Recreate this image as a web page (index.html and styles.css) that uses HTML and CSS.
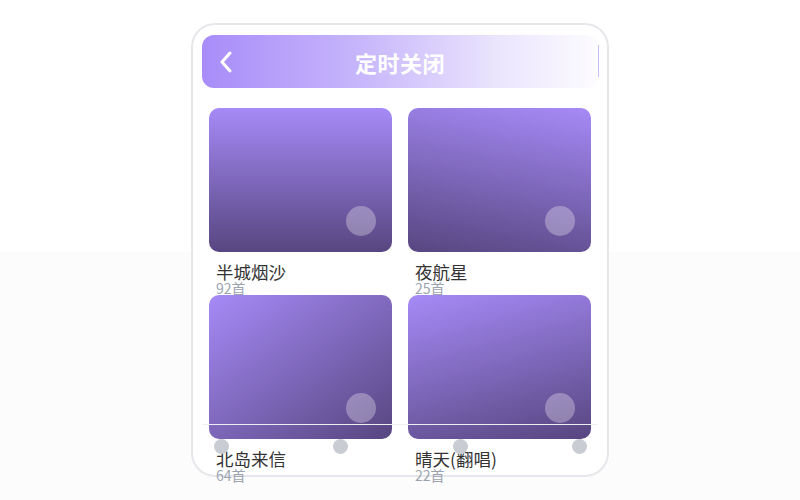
FILE: index.html
```html
<!DOCTYPE html>
<html lang="zh-CN">
<head>
    <meta charset="UTF-8">
    <meta name="viewport" content="width=device-width, initial-scale=1.0">
    <title>定时关闭</title>
    <link rel="stylesheet" href="styles.css">
</head>
<body>
    <div class="phone">
        <div class="topbar">
            <a class="back" href="javascript:;">
                <svg width="14" height="22" viewBox="0 0 14 22">
                    <path d="M11 2 L3 11 L11 20" fill="none" stroke="#fff" stroke-width="3" stroke-linecap="round" stroke-linejoin="round"/>
                </svg>
            </a>
            <h1 class="title">定时关闭</h1>
        </div>

        <ul class="albums">
            <li class="album">
                <div class="cover cover-a"><span class="play"></span></div>
                <p class="name">半城烟沙</p>
                <p class="count">92首</p>
            </li>
            <li class="album">
                <div class="cover cover-b"><span class="play"></span></div>
                <p class="name">夜航星</p>
                <p class="count">25首</p>
            </li>
            <li class="album">
                <div class="cover cover-c"><span class="play"></span></div>
                <p class="name">北岛来信</p>
                <p class="count">64首</p>
            </li>
            <li class="album">
                <div class="cover cover-d"><span class="play"></span></div>
                <p class="name">晴天(翻唱)</p>
                <p class="count">22首</p>
            </li>
        </ul>

        <!-- 定时滑块 -->
        <div class="slider">
            <div class="track"></div>
            <div class="dots">
                <span></span>
                <span></span>
                <span></span>
                <span></span>
            </div>
        </div>
    </div>
</body>
</html>
```

FILE: styles.css
```css
*{
    margin: 0;
    padding: 0;
    box-sizing: border-box;
}
body{
    width: 800px;
    height: 500px;
    overflow: hidden;
    font-family: "Noto Sans CJK SC", "Noto Sans", sans-serif;
    background: linear-gradient(#fff 252px, #fcfcfd 252px);
}
.phone{
    position: relative;
    width: 418px;
    height: 454px;
    margin: 23px auto 0;
    padding: 10px 9px;
    background: #fff;
    border: 2px solid #e6e7ea;
    border-radius: 24px;
}

/* 顶部标题栏 */
.topbar{
    position: relative;
    display: flex;
    align-items: center;
    justify-content: center;
    height: 53px;
    border-radius: 12px;
    background: linear-gradient(90deg, #a88cf9 0%, #c7b6fb 40%, #ebe5fd 75%, #fdfcff 100%);
}
.topbar::after{
    content: "";
    position: absolute;
    right: -1px;
    top: 10px;
    width: 1px;
    height: 32px;
    background: #c9bdf5;
}
.back{
    position: absolute;
    left: 17px;
    top: 16px;
    display: block;
    width: 14px;
    height: 22px;
}
.back svg{
    display: block;
}
.title{
    color: #fff;
    font-size: 22px;
    font-weight: 700;
    letter-spacing: 0.5px;
    line-height: 26px;
}

/* 专辑列表 */
.albums{
    list-style-type: none;
    display: grid;
    grid-template-columns: 183px 183px;
    column-gap: 16px;
    margin: 20px 7px 0;
}
.cover{
    position: relative;
    height: 144px;
    border-radius: 10px;
}
.cover-a{ background: linear-gradient(180deg, #a68af7, #574680); }
.cover-b{ background: linear-gradient(190deg, #a68af7, #574680); }
.cover-c{ background: linear-gradient(145deg, #a68af7, #574680); }
.cover-d{ background: linear-gradient(165deg, #a68af7, #574680); }
.play{
    position: absolute;
    right: 16px;
    bottom: 16px;
    width: 30px;
    height: 30px;
    border-radius: 50%;
    background: rgba(255, 255, 255, 0.3);
}
.name{
    margin-top: 10px;
    padding-left: 7px;
    color: #333;
    font-size: 17.5px;
    line-height: 19px;
}
.count{
    padding-left: 7px;
    color: #9ca3af;
    font-size: 14px;
    line-height: 14px;
}

/* 滑块压在列表上面 */
.slider{
    position: absolute;
    left: 10px;
    right: 10px;
    top: 399px;
}
.track{
    height: 1px;
    background: #eeeef2;
}
.dots{
    display: flex;
    justify-content: space-between;
    margin: 14px 10px 0 11px;
}
.dots span{
    width: 15px;
    height: 15px;
    border-radius: 50%;
    background: #c9cdd3;
}
```
